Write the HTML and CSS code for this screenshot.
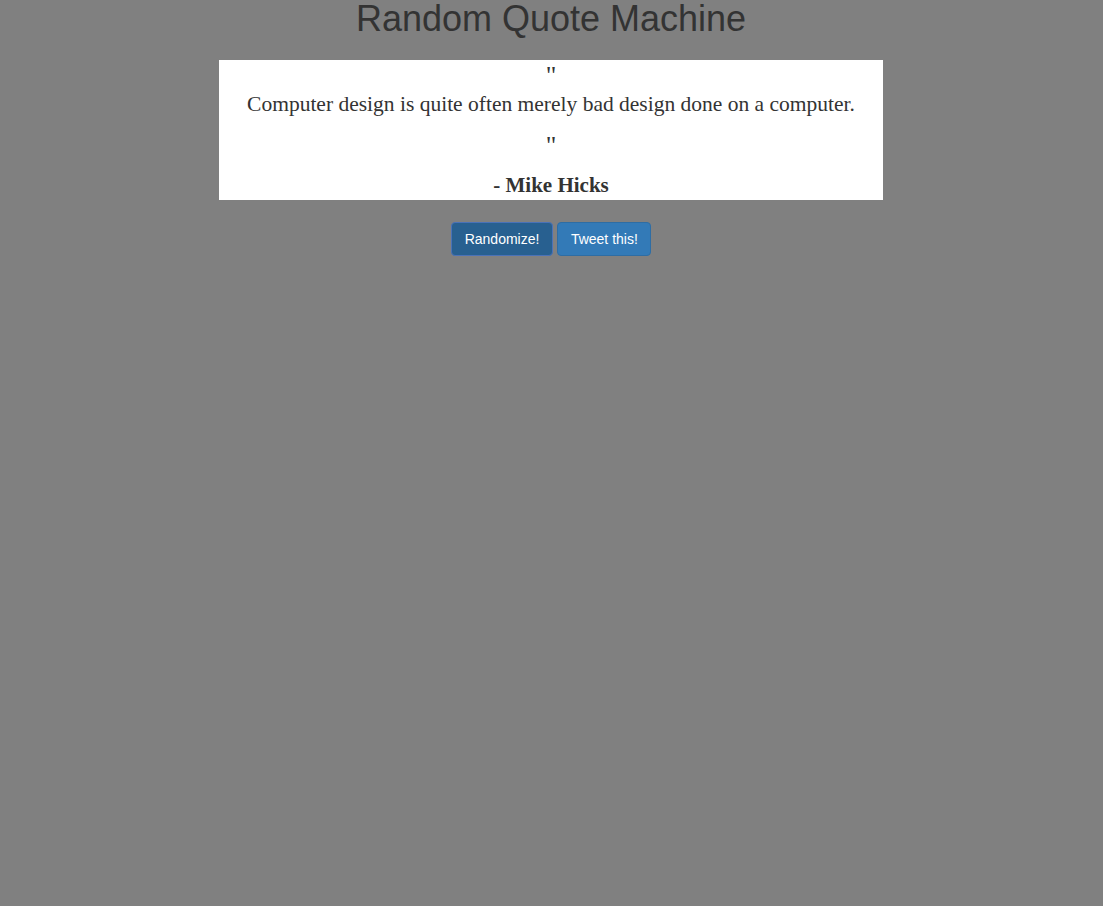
FILE: index.html
```html
<!DOCTYPE html>
<html>
<head>
<meta charset="utf-8">
<link rel="stylesheet" href="styles.css">
</head>
<body>
<h1 class="title">Random Quote Machine</h1>
<div class="quote-box">
  <p class="mark">"</p>
  <p class="quote-text">Computer design is quite often merely bad design done on a computer.</p>
  <p class="mark">"</p>
  <p class="author">- Mike Hicks</p>
</div>
<div class="actions">
  <button class="btn btn-active">Randomize!</button>
  <button class="btn btn-tweet">Tweet this!</button>
</div>
</body>
</html>
```
FILE: styles.css
```css
html, body {
  margin: 0;
  padding: 0;
}
body {
  background: #808080;
  color: #333;
  font-family: "Liberation Sans", Arial, sans-serif;
  font-size: 14px;
  padding-right: 1px;
}
.title {
  margin: 0;
  height: 40px;
  line-height: 38px;
  text-align: center;
  font-weight: 400;
  font-size: 36px;
  color: #333;
}
.quote-box {
  width: 664px;
  height: 140px;
  margin: 20px auto 0;
  background: #fff;
  text-align: center;
  font-family: "Liberation Serif", "Times New Roman", serif;
  color: #333;
  box-sizing: border-box;
  padding-top: 6px;
}
.quote-box p {
  margin: 0;
}
.mark {
  font-size: 26px;
  line-height: 20px;
  height: 20px;
}
.quote-text {
  font-size: 21.5px;
  line-height: 24px;
  padding: 6px 0 20px;
}
.author {
  font-size: 21px;
  font-weight: 700;
  line-height: 24px;
  padding-top: 17px;
}
.actions {
  display: flex;
  justify-content: center;
  gap: 4px;
  margin-top: 22px;
}
.btn {
  font-family: "Liberation Sans", Arial, sans-serif;
  font-size: 14px;
  line-height: 20px;
  padding: 6px 12.5px;
  border: 1px solid #2e6da4;
  border-radius: 4px;
  background: #337ab7;
  color: #fff;
  height: 34px;
  box-sizing: border-box;
}
.btn-active {
  padding: 6px 13px;
  background: #286090;
  border-color: #4a72b8;
}
```
